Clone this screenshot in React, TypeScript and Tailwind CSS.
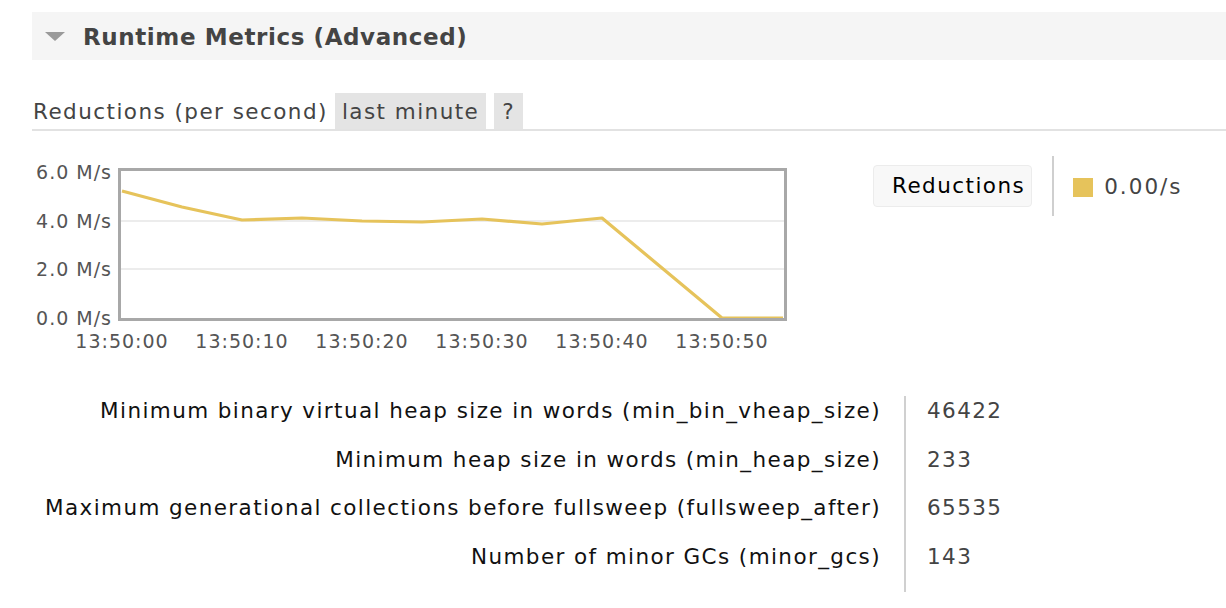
const font = { fontFamily: '"DejaVu Sans", Verdana, sans-serif' }

const points: [number, number][] = [
  [122, 191],
  [182, 207],
  [242, 220],
  [302, 218],
  [362, 221],
  [422, 222],
  [482, 219],
  [542, 224],
  [602, 218],
  [722, 318],
  [783, 318],
]

const yLabels = [
  { label: '6.0 M/s', y: 172 },
  { label: '4.0 M/s', y: 221 },
  { label: '2.0 M/s', y: 269 },
  { label: '0.0 M/s', y: 318 },
]

const xLabels = ['13:50:00', '13:50:10', '13:50:20', '13:50:30', '13:50:40', '13:50:50']

const facts = [
  { label: 'Minimum binary virtual heap size in words (min_bin_vheap_size)', value: '46422' },
  { label: 'Minimum heap size in words (min_heap_size)', value: '233' },
  { label: 'Maximum generational collections before fullsweep (fullsweep_after)', value: '65535' },
  { label: 'Number of minor GCs (minor_gcs)', value: '143' },
]

// chart svg sits at page x=32, y=150
const ox = 32
const oy = 150

function Chart() {
  return (
    <svg width={760} height={210} className="block shrink-0">
      <line x1={118 - ox} x2={786 - ox} y1={221 - oy} y2={221 - oy} stroke="#ececec" strokeWidth={2} />
      <line x1={118 - ox} x2={786 - ox} y1={269 - oy} y2={269 - oy} stroke="#ececec" strokeWidth={2} />
      <polyline
        points={points.map(([x, y]) => `${x - ox},${y - oy}`).join(' ')}
        fill="none"
        stroke="#e6c35b"
        strokeWidth={3.2}
        strokeLinejoin="round"
      />
      <rect x={119.5 - ox} y={169.5 - oy} width={666} height={150} fill="none" stroke="#a8a8a8" strokeWidth={3} />
      {yLabels.map(l => (
        <text
          key={l.label}
          x={112 - ox}
          y={l.y - oy + 7}
          textAnchor="end"
          fontSize={19}
          letterSpacing={1}
          fill="#555"
          style={font}
        >
          {l.label}
        </text>
      ))}
      {xLabels.map((l, i) => (
        <text
          key={l}
          x={122 + i * 120 - ox}
          y={348 - oy}
          textAnchor="middle"
          fontSize={19}
          letterSpacing={1}
          fill="#555"
          style={font}
        >
          {l}
        </text>
      ))}
    </svg>
  )
}

export default function App() {
  return (
    <div className="min-h-[608px] bg-white pl-[32px] pt-[12px]" style={font}>
      <div className="flex h-[48px] items-center bg-[#f5f5f5]">
        <svg width={20} height={9} className="ml-[13px]">
          <polygon points="0,0 20,0 10,9" fill="#9a9a9a" />
        </svg>
        <h2 className="ml-[18px] pt-[2px] text-[23px] font-bold tracking-[0.6px] text-[#444]">Runtime Metrics (Advanced)</h2>
      </div>

      <div className="mt-[33px] flex h-[38px] items-stretch border-b-2 border-[#e2e2e2] text-[21.5px] tracking-[1.45px] text-[#444]">
        <span className="flex items-center pl-[1px] pt-[2px]">Reductions (per second)</span>
        <span className="ml-[7px] flex items-center bg-[#e4e4e4] px-[7px] pt-[2px]">last minute</span>
        <span className="ml-[8px] flex items-center bg-[#e4e4e4] px-[8px] pt-[2px]">?</span>
      </div>

      <div className="mt-[19px] flex items-start text-[21.5px] tracking-[1.45px]">
        <Chart />
        <div className="ml-[81px] mt-[15px] flex h-[42px] items-center rounded-[4px] border border-[#ececec] bg-[#f8f8f8] pl-[18px] pr-[6px] pt-[1px] text-black">
          Reductions
        </div>
        <div className="ml-[20px] mt-[6px] h-[60px] w-[2px] bg-[#cfcfcf]" />
        <div className="ml-[19px] mt-[21px] flex items-center">
          <span className="h-[19px] w-[20px] bg-[#e6c35b]" />
          <span className="ml-[11px] tracking-[2px] text-[#444]">0.00/s</span>
        </div>
      </div>

      <div className="mt-[36px] flex text-[21.5px] tracking-[1.4px]">
        <div className="flex w-[872px] flex-col gap-[20.5px] pr-[23px] text-right">
          {facts.map(f => (
            <div key={f.label} className="h-[28px] whitespace-nowrap pt-[1px] leading-[28px] text-[#111]">
              {f.label}
            </div>
          ))}
        </div>
        <div className="flex flex-col gap-[20.5px] border-l-2 border-[#d0d0d0] pb-[22px] pl-[21px]">
          {facts.map(f => (
            <div key={f.value} className="h-[28px] pt-[1px] leading-[28px] text-[#444]">
              {f.value}
            </div>
          ))}
        </div>
      </div>
    </div>
  )
}
